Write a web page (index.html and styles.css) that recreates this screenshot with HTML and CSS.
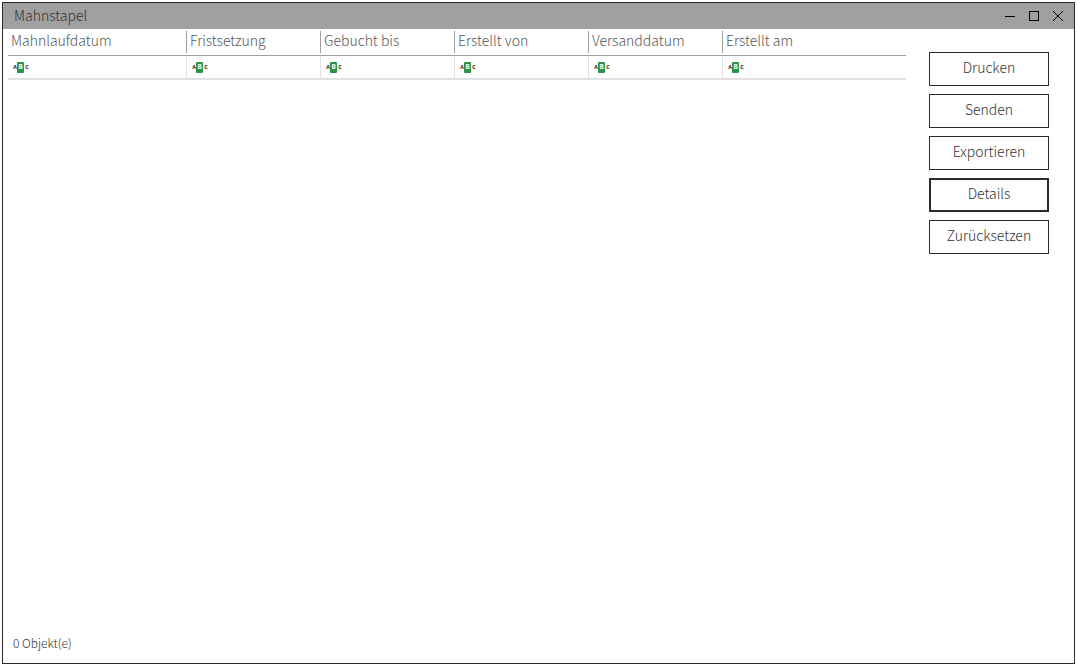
FILE: index.html
```html
<!DOCTYPE html>
<html lang="de">
<head>
<meta charset="utf-8">
<title>Mahnstapel</title>
<link rel="stylesheet" href="styles.css">
</head>
<body>
<div class="window">
  <header class="titlebar">
    <h1 class="title">Mahnstapel</h1>
    <div class="controls">
      <button class="control" aria-label="Minimieren"><svg viewBox="0 0 10 10" shape-rendering="crispEdges"><path d="M0 5.5H10"/></svg></button>
      <button class="control" aria-label="Maximieren"><svg viewBox="0 0 10 10" shape-rendering="crispEdges"><path d="M.5 .5H9.5V9.5H.5Z"/></svg></button>
      <button class="control" aria-label="Schließen"><svg viewBox="0 0 10 10"><path d="M0 0L10 10M10 0L0 10"/></svg></button>
    </div>
  </header>
  <main class="content">
    <section class="list">
      <table class="grid">
        <colgroup><col class="first"><col class="mid"><col class="mid"><col class="mid"><col class="mid"><col></colgroup>
        <thead>
          <tr class="heads">
            <th><span>Mahnlaufdatum</span></th><th><span>Fristsetzung</span></th><th><span>Gebucht bis</span></th><th><span>Erstellt von</span></th><th><span>Versanddatum</span></th><th><span>Erstellt am</span></th>
          </tr>
        </thead>
        <tbody>
          <tr class="filters">
            <td><button class="filter"><span>A</span><b>B</b><span>C</span></button></td>
            <td><button class="filter"><span>A</span><b>B</b><span>C</span></button></td>
            <td><button class="filter"><span>A</span><b>B</b><span>C</span></button></td>
            <td><button class="filter"><span>A</span><b>B</b><span>C</span></button></td>
            <td><button class="filter"><span>A</span><b>B</b><span>C</span></button></td>
            <td><button class="filter"><span>A</span><b>B</b><span>C</span></button></td>
          </tr>
        </tbody>
      </table>
    </section>
    <aside class="actions">
      <button class="action">Drucken</button>
      <button class="action">Senden</button>
      <button class="action">Exportieren</button>
      <button class="action default">Details</button>
      <button class="action">Zurücksetzen</button>
    </aside>
  </main>
  <footer class="status">0 Objekt(e)</footer>
</div>
</body>
</html>
```
FILE: styles.css
```css
* { box-sizing: border-box; }

body {
  margin: 0;
  padding: 2px;
  background: #fff;
  color: #333;
  font: 300 14px/20px "Noto Sans CJK SC", "Noto Sans", sans-serif;
}

button {
  font: inherit;
  color: inherit;
  background: none;
  border: 0;
  padding: 0;
}

.window {
  display: flex;
  flex-direction: column;
  min-height: calc(100vh - 4px);
  border: 1px solid #2b2b2b;
}

.titlebar {
  display: flex;
  justify-content: space-between;
  align-items: center;
  height: 26px;
  padding: 0 11px;
  background: #a0a0a0;
}

.title { margin: 0; padding-bottom: 3px; font-size: 14px; font-weight: 300; }

.controls { display: flex; gap: 14px; }
.control { display: flex; width: 10px; height: 10px; }
.control svg { width: 10px; height: 10px; fill: none; stroke: #000; overflow: visible; }

.content { display: flex; flex: 1; padding: 0 25px 0 5px; }

.list { flex: 1; margin-right: 23px; }

.grid { width: 100%; table-layout: fixed; border-collapse: separate; border-spacing: 0; }
.first { width: 178px; }
.mid { width: 134px; }

th {
  height: 27px;
  padding: 0;
  border-bottom: 1px solid #a0a0a0;
  color: #555;
  font-weight: 300;
  text-align: left;
  vertical-align: top;
}
th span { display: block; height: 22px; margin-top: 2px; padding-left: 3px; line-height: 18px; }
th + th span { border-left: 1px solid #a0a0a0; }

td { height: 24px; padding: 0 0 0 5px; border-bottom: 2px solid #e0e0e0; }
td + td { border-left: 1px solid #e0e0e0; }

.filter {
  display: flex;
  align-items: center;
  height: 11px;
  color: #222;
  font: 700 6px/11px "Liberation Mono", monospace;
}
.filter span { width: 4px; }
.filter b { width: 7px; background: #2c9247; border-radius: 1px; color: #fff; font-size: 7px; text-align: center; }
.filter b + span { margin-left: 1px; }

.actions { display: flex; flex-direction: column; gap: 8px; width: 120px; padding-top: 23px; }
.action { height: 34px; padding-bottom: 4px; border: 1px solid #2b2b2b; background: #fff; }
.action.default { border-width: 2px; }

.status { padding: 0 10px 10px; font-size: 12px; }
```
